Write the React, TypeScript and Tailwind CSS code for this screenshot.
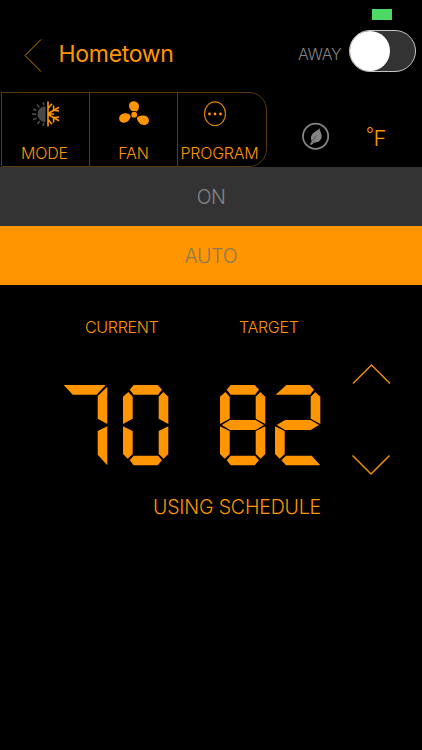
import type { ReactNode } from "react";

type SegmentMap = Record<string, string>;

const BASE: SegmentMap = {
  a: "6.7,4.7 10.7,0 34.7,0 39,4.7 35,9.7 10.7,9.7",
  b: "45.3,11.7 40.3,7 35.7,11.7 35.7,33.7 45.3,39",
  c: "45.3,41.3 35.7,46 35.7,69 40.7,73.7 45.3,69",
  d: "6.7,75.3 10.7,70.7 35,70.7 39,75.3 34.7,80.3 10.7,80.3",
  e: "0,41.3 9.7,46 9.7,69 4.7,73.7 0,69",
  f: "0,11.7 5.3,7 9.7,11.7 9.7,33.7 0,39",
  g: "1.7,40 10,35 35.7,35 44,40 35.7,45 10,45",
};

// Segments lit per digit; a free end is extended to the digit's corner.
const DIGITS: Record<string, SegmentMap> = {
  "0": { a: BASE.a, b: BASE.b, c: BASE.c, d: BASE.d, e: BASE.e, f: BASE.f },
  "2": {
    a: "0.7,9.7 11.3,0 34.7,0 39,4.7 35,9.7",
    b: BASE.b,
    g: BASE.g,
    e: BASE.e,
    d: "6.3,75.3 11,70.7 36.7,70.7 45.3,80.3 11,80.3",
  },
  "7": {
    a: "1.7,0 43.7,0 34.7,9.7 10.7,9.7",
    b: "45.3,1.7 45.3,39 35.7,33.7 35.7,11",
    c: "45.3,41.3 45.3,80.3 35.7,69.7 35.7,46",
  },
  "8": BASE,
};

function SevenSegment({ digit }: { digit: string }) {
  return (
    <svg viewBox="0 0 46 81" className="h-[81px] w-[46px] shrink-0 fill-[#ff9500]">
      {Object.entries(DIGITS[digit]).map(([name, points]) => (
        <polygon key={name} points={points} />
      ))}
    </svg>
  );
}

function ModeIcon() {
  return (
    <svg viewBox="0 0 28 26" className="h-[26px] w-[28px]" fill="none">
      <path d="M13.5 5.2a8 8 0 0 0 0 16z" fill="#484848" />
      <path d="M11.2 1.2l.8 3M5 3.6l2.2 2.9M1.2 8l3.2 1.5M0 13.2h4M1.2 18.8l3.2-1.6M5.6 23l2-3M11 25l.8-3.2" stroke="#484848" strokeWidth="1.7" />
      <path d="M16 .5v25M16 7.5l4-4.8M16 18.5l4 4.8M16 13h6M16.300 12.500l10.700-6.300M16.300 13.500l10.700 6.300M21.600 4.500v4.700l5.400.8M21.600 21.500v-4.700l5.400-.8" stroke="#ff9500" strokeWidth="1.6" />
    </svg>
  );
}

function FanIcon() {
  return (
    <svg viewBox="0 0 32 26" className="h-[26px] w-[32px]" fill="#ff9500">
      <path d="M14.8 10.8C12 8.8 11 6.8 11 4.6 11 2 13 .2 15.6.2c3 0 5.400 2.200 5.400 5.300 0 2.300-1 4-2.700 5.300z" />
      <path d="M12.8 14.8c-.6 3.800-3.200 6.900-6.800 6.900-3 0-4.900-1.700-4.900-4.200 0-2.900 2.700-5.200 6.200-5.200 2.200 0 4.200.8 5.500 2.500z" />
      <path d="M18.8 16.600c1.600-1.300 3.600-2 5.700-2 3.800 0 6.400 2 6.400 4.900 0 2.700-2.200 4.600-5 4.600-3.800 0-6.600-3.200-7.100-7.500z" />
      <circle cx="16.200" cy="13.700" r="3.700" fill="#000" />
      <circle cx="16.200" cy="13.700" r="2.900" />
    </svg>
  );
}

function ProgramIcon() {
  return (
    <svg viewBox="0 0 24 26" className="h-[26px] w-[24px]" fill="none">
      <ellipse cx="12" cy="12.700" rx="10.500" ry="11.800" stroke="#e08504" strokeWidth="1.100" />
      <g fill="#ff9500">
        <circle cx="6.500" cy="13" r="1.400" />
        <circle cx="12" cy="13" r="1.400" />
        <circle cx="17.500" cy="13" r="1.400" />
      </g>
    </svg>
  );
}

function LeafIcon() {
  return (
    <svg viewBox="0 0 28 28" className="h-7 w-7" fill="none">
      <circle cx="13.600" cy="14.300" r="12.600" stroke="#858585" strokeWidth="1.800" />
      <path d="M17.300 6.300c-1.500 2.700-6.300 3.700-7.800 7.200-.8 2-.6 4 .2 5.500-.3 1.300-1 2.400-2.200 3.200l2.300.6c1-.6 1.600-1.400 1.900-2.300 4 .6 7.300-1.600 8-5.400.5-2.900-1.400-5.300-2.400-8.800z" fill="#858585" />
      <path d="M14.600 13.500c-1.600 1.600-3 3.400-4 5.500" stroke="#333" strokeWidth=".6" />
    </svg>
  );
}

function Tab({ label, icon, className = "" }: { label: string; icon: ReactNode; className?: string }) {
  return (
    <button className={`flex flex-col items-center border-[#5a3a0c] pt-[8px] ${className}`}>
      {icon}
      <span className="mt-[16px] text-[16px] leading-5 tracking-[-0.2px]">{label}</span>
    </button>
  );
}

export default function App() {
  return (
    <main className="flex h-[750px] w-[422px] flex-col overflow-hidden bg-black font-['Inter',sans-serif] font-light text-[#ff9500]">
      <div className="flex h-5 shrink-0 justify-end pt-[9px] pr-[30px]">
        <div className="h-[11px] w-[20px] bg-[#4cd964]" />
      </div>
      <header className="flex h-[72px] shrink-0 items-start pl-[24px]">
        <svg viewBox="0 0 18 34" className="mt-[18px] h-[34px] w-[18px]" fill="none" stroke="#d17b05">
          <path d="M17 1.500L1 17.500l16 16" />
        </svg>
        <h1 className="mt-[19px] ml-[16.500px] w-[199.500px] text-[23px] leading-[30px] font-normal tracking-[-0.300px]">Hometown</h1>
        <span className="mt-[24px] ml-[40px] w-[50px] text-[16px] leading-5 tracking-[-0.300px] text-[#858585]">AWAY</span>
        <button className="mt-[10px] ml-[1px] flex h-[42px] w-[67px] items-center rounded-full border border-[#c4c4c4] bg-[#333]">
          <span className="h-[40px] w-[40px] rounded-full bg-white" />
        </button>
      </header>
      <div className="flex h-[75px] shrink-0">
        <nav className="ml-[1px] flex w-[266px] overflow-hidden rounded-r-[18px] border border-[#5a3a0c]">
          <Tab
            label="MODE"
            icon={
              <span className="pl-[3px]">
                <ModeIcon />
              </span>
            }
            className="w-[88px] border-r pr-[2px]"
          />
          <Tab label="FAN" icon={<FanIcon />} className="w-[88px] border-r" />
          <Tab
            label="PROGRAM"
            icon={
              <span className="pr-[9px]">
                <ProgramIcon />
              </span>
            }
            className="w-[83px]"
          />
        </nav>
        <div className="mt-[30px] ml-[35px]">
          <LeafIcon />
        </div>
        <span className="mt-[31px] ml-[36px] flex items-start font-light">
          <span className="w-[7.500px] text-[17px] leading-[22px]">°</span>
          <span className="text-[22px] leading-[31px]">F</span>
        </span>
      </div>
      <button className="h-[59px] shrink-0 bg-[#333] pt-[2px] text-[19.500px] tracking-[-0.500px] text-[#858585]">ON</button>
      <button className="h-[59px] shrink-0 bg-[#ff9500] pt-[2px] text-[19.500px] tracking-[-0.200px] text-[#8b7a55]">AUTO</button>
      <section className="flex flex-col">
        <div className="flex h-[100px] pt-[32px] text-[16px] leading-5 tracking-[-0.300px]">
          <span className="ml-[85px] w-[154px]">CURRENT</span>
          <span>TARGET</span>
        </div>
        <div className="flex h-[100px]">
          <div className="flex w-[108px] gap-[15px] pl-[61.700px]">
            <SevenSegment digit="7" />
            <SevenSegment digit="0" />
          </div>
          <div className="ml-[112.300px] flex gap-[9px]">
            <SevenSegment digit="8" />
            <SevenSegment digit="2" />
          </div>
          <div className="-mt-[22px] ml-[31px] flex flex-col gap-[70px]">
            <svg viewBox="0 0 40 22" className="h-[22px] w-[40px]" fill="none" stroke="#f08e05" strokeWidth="1.500">
              <path d="M1 20.500L19.500 2 38 20.500" />
            </svg>
            <svg viewBox="0 0 40 22" className="h-[22px] w-[40px]" fill="none" stroke="#f08e05" strokeWidth="1.500">
              <path d="M.5 .5L19 19 37.500 .5" />
            </svg>
          </div>
        </div>
        <p className="mt-[9px] ml-[153px] text-[19.500px] leading-[26px] tracking-[-0.150px]">USING SCHEDULE</p>
      </section>
    </main>
  );
}
